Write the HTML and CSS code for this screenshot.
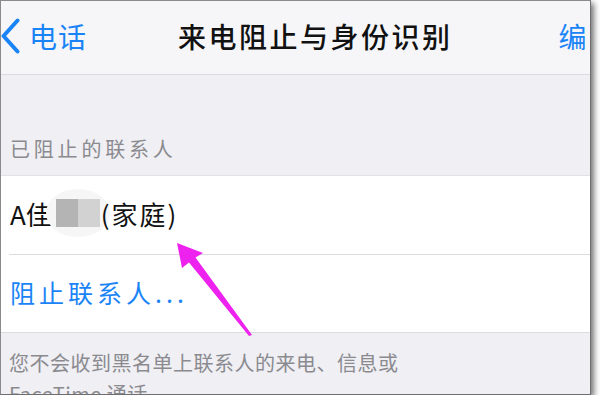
FILE: index.html
```html
<!DOCTYPE html>
<html lang="zh-CN">

<head>
    <meta charset="UTF-8">
    <meta name="viewport" content="width=device-width, initial-scale=1.0">
    <title>来电阻止与身份识别</title>
    <link rel="stylesheet" href="styles.css">
</head>

<body>
    <div class="frame">
        <div class="nav">
            <div class="nav__back">
                <svg class="chevron" width="19" height="36" viewBox="0 0 19 36">
                    <path d="M16.5 2.5 L2.5 18 L16.5 33.5" fill="none" stroke="#1a84f7" stroke-width="4" stroke-linecap="round" stroke-linejoin="round" />
                </svg>
                <span>电话</span>
            </div>
            <div class="nav__title">来电阻止与身份识别</div>
            <div class="nav__edit">编</div>
        </div>

        <div class="section-head">已阻止的联系人</div>

        <div class="group">
            <div class="row">
                <span>A佳</span>
                <span class="blur">
                    <span class="blur__a"></span><span class="blur__b"></span>
                </span>
                <span class="row__tag">(家庭)</span>
            </div>
            <div class="row row--link">阻止联系人...</div>
        </div>

        <div class="section-foot">
            您不会收到黑名单上联系人的来电、信息或<br>FaceTime 通话
        </div>

        <svg class="arrow" width="590" height="393" viewBox="0 0 590 393">
            <polygon points="177,243 203,253 195.5,257.5 252,335 249,336 189,262.5 182,268" fill="#ee22ee" />
        </svg>
    </div>
</body>

</html>
```

FILE: styles.css
```css
* {
    box-sizing: border-box;
    margin: 0;
    padding: 0;
}

body {
    background: #fff;
    font-family: "Noto Sans CJK SC", "Noto Sans", sans-serif;
}

.frame {
    position: relative;
    width: 591px;
    height: 395px;
    overflow: hidden;
    background: #efeff4;
    border-top: 1px solid #8a8a8a;
    border-left: 1px solid #8a8a8a;
    border-right: 1px solid #6e6e6e;
    border-bottom: 1px solid #6e6e6e;
    box-shadow: 3px 3px 6px rgba(0, 0, 0, 0.55);
}

.nav {
    height: 74px;
    display: flex;
    align-items: center;
    padding-bottom: 4px;
    background: #f6f6f8;
    border-bottom: 1px solid #dcdce0;
    white-space: nowrap;
}

.nav__back {
    width: 177px;
    flex-shrink: 0;
    display: flex;
    align-items: center;
    gap: 9px;
    color: #1a84f7;
    font-size: 28px;
    letter-spacing: 1px;
}

.nav__title {
    flex-shrink: 0;
    font-size: 28px;
    font-weight: 500;
    letter-spacing: 2.5px;
    color: #111;
}

.nav__edit {
    flex-shrink: 0;
    margin-left: 106px;
    font-size: 28px;
    color: #1a84f7;
}

.section-head {
    height: 100px;
    display: flex;
    align-items: flex-end;
    padding: 0 0 14px 9px;
    font-size: 20px;
    line-height: 24px;
    letter-spacing: 3.8px;
    color: #8a8a8f;
}

.group {
    background: #fff;
    border-top: 1px solid #e2e2e6;
    border-bottom: 1px solid #dcdce0;
}

.row {
    height: 78px;
    display: flex;
    align-items: center;
    padding: 0 0 4px 9px;
    font-size: 26px;
    color: #111;
}

.row + .row {
    border-top: 1px solid #dcdce0;
    margin-left: 8px;
    padding-left: 1px;
}

.row__tag {
    letter-spacing: 2px;
}

.row--link {
    font-size: 25px;
    color: #1a84f7;
    letter-spacing: 4px;
}

.blur {
    display: flex;
    height: 28px;
    margin: 0 1px 0 4px;
    border-radius: 50%;
    box-shadow: 0 0 0 10px #f6f6f6;
    background: #f6f6f6;
}

.blur__a {
    width: 22px;
    background: #b4b4b4;
}

.blur__b {
    width: 22px;
    background: #d2d2d2;
}

.section-foot {
    padding: 14px 0 0 8px;
    font-size: 20px;
    line-height: 31px;
    letter-spacing: 0.5px;
    color: #8a8a8f;
}

.arrow {
    position: absolute;
    left: -1px;
    top: -1px;
}
```
